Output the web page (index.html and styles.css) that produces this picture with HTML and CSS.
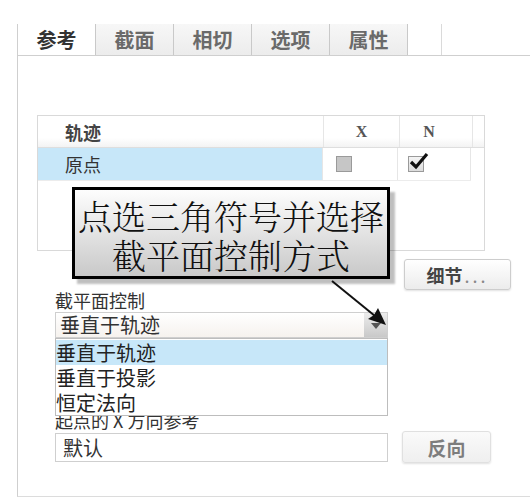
FILE: index.html
```html
<!DOCTYPE html>
<html lang="zh-CN">
<head>
  <meta charset="UTF-8" />
  <title>扫描 - 参考</title>
  <link rel="stylesheet" href="styles.css">
</head>
<body>
  <div class="panel">
    <div class="tabs">
      <div class="tab active">参考</div>
      <div class="tab">截面</div>
      <div class="tab">相切</div>
      <div class="tab">选项</div>
      <div class="tab">属性</div>
      <div class="tab blank"></div>
    </div>

    <div class="content">
      <div class="trace-table">
        <div class="row head">
          <span class="col-name">轨迹</span>
          <span class="col-x">X</span>
          <span class="col-n">N</span>
        </div>
        <div class="row selected">
          <span class="col-name">原点</span>
          <span class="col-x"><i class="check off"></i></span>
          <span class="col-n">
            <i class="check on">
              <svg width="22" height="22" viewBox="0 0 22 22"><path d="M3 11 L8 16 L19 3" fill="none" stroke="#111" stroke-width="3.2" stroke-linejoin="miter"/></svg>
            </i>
          </span>
        </div>
      </div>

      <div class="fields">
        <div class="detail-row">
          <button class="btn btn-detail">细节<span class="dots">...</span></button>
        </div>

        <label class="field-label">截平面控制</label>
        <div class="select">
          <span class="select-value">垂直于轨迹</span>
          <span class="select-arrow"></span>
          <ul class="dropdown">
            <li class="current">垂直于轨迹</li>
            <li>垂直于投影</li>
            <li>恒定法向</li>
          </ul>
        </div>

        <label class="field-label dir-label">起点的 X 方向参考</label>
        <div class="input-row">
          <div class="input">默认</div>
          <button class="btn btn-flip">反向</button>
        </div>
      </div>
    </div>

    <div class="callout">点选三角符号并选择<br>截平面控制方式</div>
    <svg class="pointer" width="512" height="473" viewBox="0 0 512 473">
      <line x1="314" y1="257" x2="357" y2="292" stroke="#111" stroke-width="2"/>
      <polygon points="368,301 350,295 356,291 360,284" fill="#111"/>
    </svg>
  </div>
</body>
</html>
```

FILE: styles.css
```css
body {
  margin: 0;
  background: #fff;
  font-family: "Noto Sans CJK SC", sans-serif;
  color: #333;
}
.panel {
  position: relative;
  margin: 24px 0 0 17px;
  height: 472px;
  border-left: 1px solid #cfcfcf;
  border-bottom: 1px solid #dcdcdc;
}
.tabs {
  display: flex;
  height: 31px;
  border-bottom: 1px solid #cfcfcf;
}
.tab {
  width: 77px;
  line-height: 31px;
  text-align: center;
  font-size: 20px;
  font-weight: bold;
  color: #6a6a6a;
  background: linear-gradient(#f7f7f7, #ececec);
  border-right: 1px solid #c9c9c9;
}
.tab.active {
  color: #333;
  background: #fff;
}
.tab.blank {
  width: 33px;
  background: #fff;
  border-right: 1px solid #dadada;
}
.content {
  padding: 59px 0 0 19px;
}
.trace-table {
  width: 446px;
  height: 134px;
  border: 1px solid #d9d9d9;
}
.row {
  display: flex;
  height: 31px;
}
.row.head {
  border-bottom: 1px solid #dedede;
  background: linear-gradient(#fff 70%, #f3f3f3);
}
.row.selected {
  height: 32px;
  border-bottom: 1px solid #ececec;
  width: 433px;
}
.row span {
  display: flex;
  align-items: center;
}
.col-name {
  width: 258px;
  padding-left: 27px;
  font-size: 18px;
}
.head .col-name {
  font-weight: bold;
  color: #444;
}
.selected .col-name {
  background: #c7e7f9;
  color: #333;
}
.col-x {
  width: 75px;
  border-left: 1px solid #e6e6e6;
}
.col-n {
  width: 72px;
  border-left: 1px solid #e6e6e6;
  border-right: 1px solid #e6e6e6;
}
.head .col-x,
.head .col-n {
  justify-content: center;
  font-family: "Liberation Serif", serif;
  font-weight: bold;
  font-size: 16px;
  color: #555;
}
.head .col-n {
  padding-right: 14px;
  width: 58px;
}
.selected .col-x {
  padding-left: 13px;
  width: 62px;
}
.selected .col-n {
  padding-left: 10px;
  width: 62px;
}
.check {
  position: relative;
  display: block;
  width: 14px;
  height: 14px;
  border: 1px solid #9a9a9a;
}
.check.off {
  background: #c6c6c6;
}
.check.on {
  background: linear-gradient(#f4f4f4, #dcdcdc);
}
.check svg {
  position: absolute;
  left: -1px;
  top: -6px;
}
.fields {
  padding-left: 18px;
}
.detail-row {
  margin-top: 8px;
  padding-left: 349px;
  height: 31px;
}
.btn {
  font-family: inherit;
  border: 1px solid #cdcdcd;
  border-radius: 3px;
  background: linear-gradient(#fff, #ececec);
  box-shadow: 0 1px 2px rgba(0,0,0,0.12);
  padding: 0;
}
.btn-detail {
  width: 107px;
  height: 31px;
  font-size: 18px;
  font-weight: bold;
  color: #444;
}
.dots {
  color: #888;
  font-weight: normal;
  letter-spacing: 3px;
  margin-left: 2px;
}
.field-label {
  display: block;
  font-size: 18px;
  line-height: 21px;
  color: #333;
}
.select {
  position: relative;
  display: flex;
  width: 331px;
  height: 24px;
  margin-top: 1px;
  border: 1px solid #cfcfcf;
  background: linear-gradient(#fff, #f6f2ee);
}
.select-value {
  flex: 1;
  padding-left: 4px;
  font-size: 20px;
  line-height: 24px;
  color: #333;
}
.select-arrow {
  width: 23px;
  background: linear-gradient(#ececec, #c9c9c9);
  position: relative;
}
.select-arrow::after {
  content: "";
  position: absolute;
  left: 7px;
  top: 10px;
  border-left: 5px solid transparent;
  border-right: 5px solid transparent;
  border-top: 6px solid #555;
}
.dropdown {
  position: absolute;
  left: -1px;
  top: 25px;
  width: 331px;
  margin: 0;
  padding: 1px 0 0;
  list-style: none;
  background: #fff;
  border: 1px solid #bdbdbd;
  z-index: 2;
}
.dropdown li {
  height: 25px;
  line-height: 25px;
  font-size: 20px;
  color: #222;
}
.dropdown li.current {
  background: #c7e7f9;
}
.dir-label {
  margin-top: 72px;
}
.input-row {
  display: flex;
  align-items: center;
  gap: 14px;
  margin-top: 0;
}
.input {
  width: 324px;
  height: 27px;
  padding-left: 7px;
  border: 1px solid #cfcfcf;
  font-size: 20px;
  line-height: 27px;
  color: #333;
}
.btn-flip {
  width: 89px;
  height: 32px;
  font-size: 19px;
  font-weight: bold;
  color: #7d7d7d;
  background: linear-gradient(#fafafa, #efefef);
  border-color: #e0e0e0;
}
.callout {
  position: absolute;
  left: 54px;
  top: 163px;
  width: 312px;
  height: 80px;
  padding-top: 6px;
  border: 3px solid #000;
  background: linear-gradient(#fdfdfd, #c9c9c9);
  box-shadow: 5px 5px 2px rgba(0,0,0,0.25);
  text-align: center;
  font-family: "Noto Serif CJK SC", "Noto Sans CJK SC", serif;
  font-size: 34px;
  font-weight: 300;
  line-height: 39px;
  color: #111;
  z-index: 3;
}
.pointer {
  position: absolute;
  left: 0;
  top: 0;
  z-index: 4;
}
```
